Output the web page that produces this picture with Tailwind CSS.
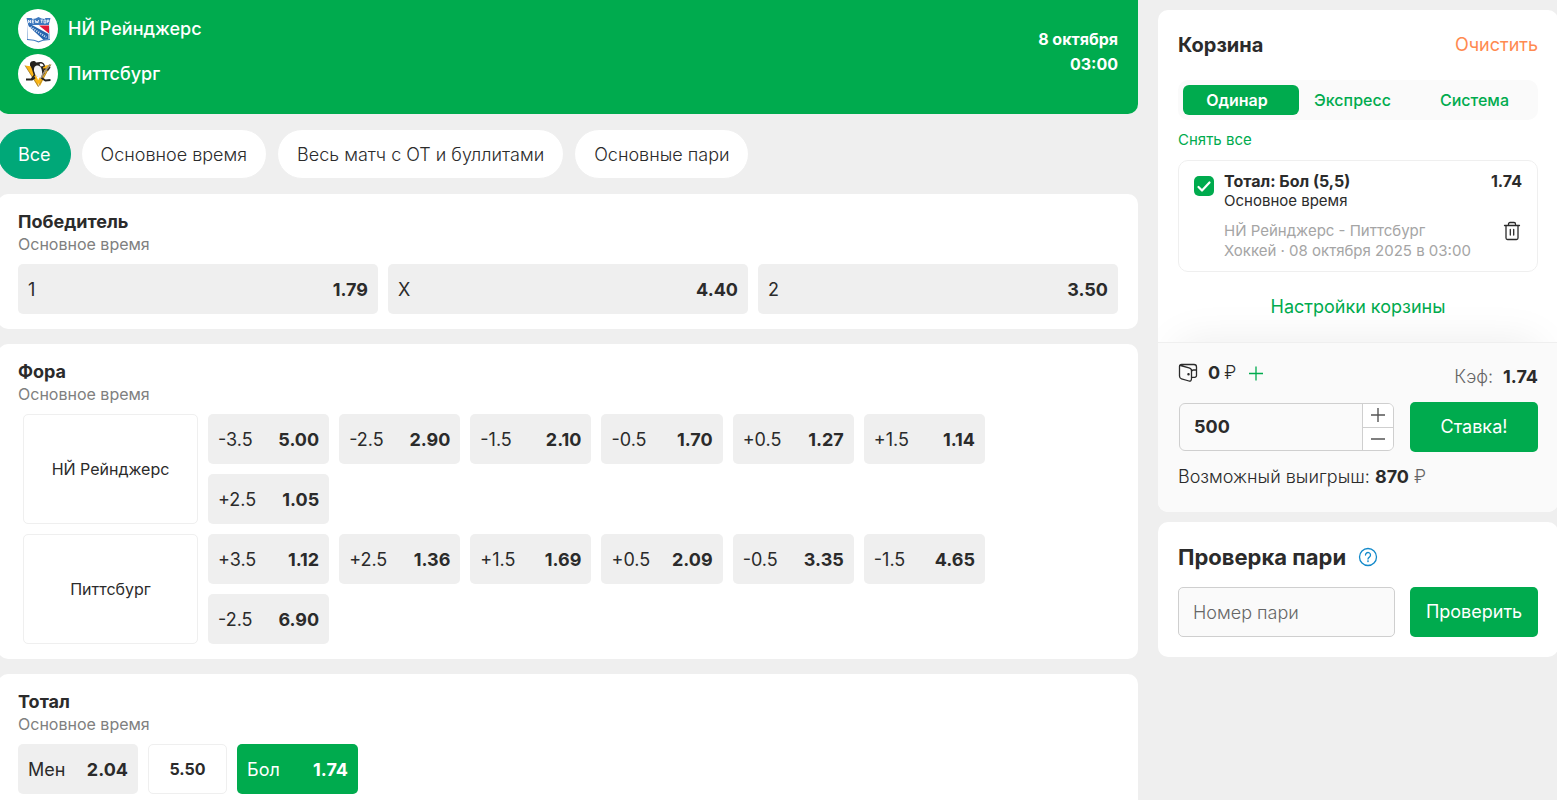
<!DOCTYPE html>
<html lang="ru">
<head>
  <meta charset="UTF-8">
  <meta name="viewport" content="width=device-width, initial-scale=1.0">
  <title>НЙ Рейнджерс - Питтсбург</title>
  <script src="https://cdn.jsdelivr.net/npm/@tailwindcss/browser@4"></script>
</head>
<body class="bg-[#efefef] font-['Inter','Liberation_Sans',sans-serif] text-lg font-normal text-[#2b2b2b]">
  <div class="flex items-start gap-5 h-screen overflow-hidden -ml-0.5 -mr-px">

    <main class="flex-1 min-w-0">
      <header class="flex justify-between h-[114px] pl-5 pr-5 pt-2 bg-[#00ab4e] text-white rounded-b-[10px]">
        <div class="flex flex-col gap-1">
          <div class="flex items-center gap-2.5 font-medium">
            <span class="flex items-center justify-center w-10 h-10 mt-px rounded-full bg-white">
              <svg class="w-[27px] h-[27px]" viewBox="0 0 27 27" aria-hidden="true">
                <path d="M1.500 2h5l1 1 3-.5 3-1.500 3 1.500 3 .5 1-1h5l-1.500 6 1 16-7 .8-4.500 1.700-4.500-1.700-7-.8 1-16z" fill="#3d78bd"/>
                <path d="M3 9h21l.5 14-6.500.8-4.500 1.500-4.500-1.500-6.500-.8z" fill="#fff"/>
                <path d="M14 9.500h10v8z" fill="#e31837"/>
                <path d="M3 9.500l3-1 17.500 9.500v5l-5 1z" fill="#2563ad"/>
                <path d="M5.500 11l16 10.500" stroke="#c9dcf2" stroke-width="2" stroke-dasharray="1.200 1.100"/>
                <path d="M3.500 7V4l2 3V4M9 4H7.300v3H9M7.300 5.500h1.500M10.200 4l.8 3 .9-2 .9 2 .8-3M15.500 4h2.400M16.700 4v3M19 4h1.800v3H19zM22.300 7V4h1.500v1.500h-1.500" fill="none" stroke="#fff" stroke-width=".8"/>
              </svg>
            </span>
            НЙ Рейнджерс
          </div>
          <div class="flex items-center gap-2.5 font-medium">
            <span class="flex items-center justify-center w-10 h-10 mt-px rounded-full bg-white">
              <svg class="w-8 h-8" viewBox="0 0 32 32" aria-hidden="true">
                <path d="M3 7.500l7 1L17 24l-1 5zM21 8l8-1.500L18 28l-2-5z" fill="#fcb514"/>
                <path d="M3 7.500l13.500 21L29 6.500" fill="none" stroke="#8a7440" stroke-width=".7"/>
                <path d="M8 5.500c1-3 5-3 6-1l4-.5c3 0 5 2 5 4.500l-2 .5 2 6-3.500 5-5-2-4-7-2.500-3.500z" fill="#25221f"/>
                <path d="M12.500 9c3-3 6-1 7 2s1 7-1 9c-5-1-8-6-6-11z" fill="#f4f4f6"/>
                <path d="M17.500 6c2-1 4 0 4 2l-3 .5z" fill="#fff"/>
                <path d="M10 9l2.500 8-3 4M22 11l4 1 2-3" fill="none" stroke="#25221f" stroke-width="1.500"/>
                <path d="M28 6.500l-7 9.500-2 5" fill="none" stroke="#9b9083" stroke-width="1.600"/>
                <path d="M4 21.500h6l3-2M19.500 20l4 2.500 5-.5" fill="none" stroke="#25221f" stroke-width="2"/>
              </svg>
            </span>
            Питтсбург
          </div>
        </div>
        <div class="pt-[19px] text-right text-base leading-[25px] font-bold">
          <div>8 октября</div>
          <div>03:00</div>
        </div>
      </header>

      <nav class="flex gap-2.5 mt-[15px]">
        <button class="h-[50px] px-[19px] pt-0.5 rounded-full border border-[#00a878] bg-[#00a878] text-white">Все</button>
        <button class="h-[50px] px-[19px] pt-0.5 rounded-full border border-[#efefef] bg-white font-light">Основное время</button>
        <button class="h-[50px] px-[19px] pt-0.5 rounded-full border border-[#efefef] bg-white font-light">Весь матч с ОТ и буллитами</button>
        <button class="h-[50px] px-[19px] pt-0.5 rounded-full border border-[#efefef] bg-white font-light">Основные пари</button>
      </nav>

      <section class="mt-[15px] px-5 pt-4 pb-[15px] rounded-[10px] bg-white">
        <h2 class="leading-6 font-bold">Победитель</h2>
        <p class="text-base leading-5 text-[#808080]">Основное время</p>
        <div class="grid grid-cols-3 gap-2.5 mt-2.5">
          <button class="flex items-center justify-between h-[50px] px-2.5 pt-0.5 rounded-[5px] bg-[#efefef]"><span>1</span><b>1.79</b></button>
          <button class="flex items-center justify-between h-[50px] px-2.5 pt-0.5 rounded-[5px] bg-[#efefef]"><span>X</span><b>4.40</b></button>
          <button class="flex items-center justify-between h-[50px] px-2.5 pt-0.5 rounded-[5px] bg-[#efefef]"><span>2</span><b>3.50</b></button>
        </div>
      </section>

      <section class="mt-[15px] px-5 pt-4 pb-[15px] rounded-[10px] bg-white">
        <h2 class="leading-6 font-bold">Фора</h2>
        <p class="text-base leading-5 text-[#808080]">Основное время</p>
        <div class="flex gap-2.5 mt-2.5 ml-[5px]">
          <div class="flex items-center justify-center w-[175px] rounded-[5px] border border-[#efefef] text-base">НЙ Рейнджерс</div>
          <div class="grid grid-cols-6 gap-2.5 flex-1 max-w-[777px]">
            <button class="flex items-center justify-between h-[50px] px-2.5 pt-0.5 rounded-[5px] bg-[#efefef]"><span>-3.5</span><b>5.00</b></button>
            <button class="flex items-center justify-between h-[50px] px-2.5 pt-0.5 rounded-[5px] bg-[#efefef]"><span>-2.5</span><b>2.90</b></button>
            <button class="flex items-center justify-between h-[50px] px-2.5 pt-0.5 rounded-[5px] bg-[#efefef]"><span>-1.5</span><b>2.10</b></button>
            <button class="flex items-center justify-between h-[50px] px-2.5 pt-0.5 rounded-[5px] bg-[#efefef]"><span>-0.5</span><b>1.70</b></button>
            <button class="flex items-center justify-between h-[50px] px-2.5 pt-0.5 rounded-[5px] bg-[#efefef]"><span>+0.5</span><b>1.27</b></button>
            <button class="flex items-center justify-between h-[50px] px-2.5 pt-0.5 rounded-[5px] bg-[#efefef]"><span>+1.5</span><b>1.14</b></button>
            <button class="flex items-center justify-between h-[50px] px-2.5 pt-0.5 rounded-[5px] bg-[#efefef]"><span>+2.5</span><b>1.05</b></button>
          </div>
        </div>
        <div class="flex gap-2.5 mt-2.5 ml-[5px]">
          <div class="flex items-center justify-center w-[175px] rounded-[5px] border border-[#efefef] text-base">Питтсбург</div>
          <div class="grid grid-cols-6 gap-2.5 flex-1 max-w-[777px]">
            <button class="flex items-center justify-between h-[50px] px-2.5 pt-0.5 rounded-[5px] bg-[#efefef]"><span>+3.5</span><b>1.12</b></button>
            <button class="flex items-center justify-between h-[50px] px-2.5 pt-0.5 rounded-[5px] bg-[#efefef]"><span>+2.5</span><b>1.36</b></button>
            <button class="flex items-center justify-between h-[50px] px-2.5 pt-0.5 rounded-[5px] bg-[#efefef]"><span>+1.5</span><b>1.69</b></button>
            <button class="flex items-center justify-between h-[50px] px-2.5 pt-0.5 rounded-[5px] bg-[#efefef]"><span>+0.5</span><b>2.09</b></button>
            <button class="flex items-center justify-between h-[50px] px-2.5 pt-0.5 rounded-[5px] bg-[#efefef]"><span>-0.5</span><b>3.35</b></button>
            <button class="flex items-center justify-between h-[50px] px-2.5 pt-0.5 rounded-[5px] bg-[#efefef]"><span>-1.5</span><b>4.65</b></button>
            <button class="flex items-center justify-between h-[50px] px-2.5 pt-0.5 rounded-[5px] bg-[#efefef]"><span>-2.5</span><b>6.90</b></button>
          </div>
        </div>
      </section>

      <section class="mt-[15px] px-5 pt-4 pb-[15px] rounded-[10px] bg-white">
        <h2 class="leading-6 font-bold">Тотал</h2>
        <p class="text-base leading-5 text-[#808080]">Основное время</p>
        <div class="flex gap-2.5 mt-2.5">
          <button class="flex items-center justify-between w-[120px] h-[50px] px-2.5 pt-0.5 rounded-[5px] bg-[#efefef]"><span>Мен</span><b>2.04</b></button>
          <div class="flex items-center justify-center w-[79px] rounded-[5px] border border-[#efefef] text-base font-bold">5.50</div>
          <button class="flex items-center justify-between w-[121px] h-[50px] px-2.5 pt-0.5 rounded-[5px] bg-[#00ab4e] text-white"><span>Бол</span><b>1.74</b></button>
        </div>
      </section>
    </main>

    <aside class="w-[400px] shrink-0 pt-2.5">
      <section class="rounded-[10px] bg-white overflow-hidden">
        <div class="flex flex-col h-[332px] px-5 pt-5">
          <div class="flex items-center justify-between leading-[30px]">
            <h2 class="text-xl leading-[30px] font-bold">Корзина</h2>
            <button class="text-[#ff8a50]">Очистить</button>
          </div>
          <div class="grid grid-cols-[116px_1fr_1fr] mt-5 p-[5px] rounded-[10px] bg-[#fafafa] text-base leading-[30px] font-medium text-[#00ab4e]">
            <button class="pr-2 rounded-md bg-[#00ab4e] text-white font-semibold">Одинар</button>
            <button class="pr-2.5">Экспресс</button>
            <button>Система</button>
          </div>
          <button class="self-start mt-2.5 text-[15px] leading-5 text-[#00ab4e]">Снять все</button>

          <div class="flex gap-2.5 mt-2.5 h-28 px-[15px] pt-[10px] rounded-[10px] border border-[#efefef]">
            <label class="relative mt-[5px] h-5 w-5 shrink-0">
              <input type="checkbox" checked aria-label="Тотал: Бол (5,5)" class="block w-5 h-5 appearance-none rounded-[5px] bg-[#00ab4e]">
              <svg class="absolute inset-0 w-5 h-5 pointer-events-none" viewBox="0 0 20 20" fill="none" stroke="#fff" stroke-width="2.200" stroke-linecap="round" stroke-linejoin="round" aria-hidden="true"><path d="M4.500 11l3.500 3.500L15.500 6.500"/></svg>
            </label>
            <div class="flex-1 text-[15px] leading-5">
              <div class="text-base leading-5 font-bold">Тотал: Бол (5,5)</div>
              <div>Основное время</div>
              <div class="mt-2.5 text-[#a5a5a5]">НЙ Рейнджерс - Питтсбург</div>
              <div class="text-[#a5a5a5]">Хоккей · 08 октября 2025 в 03:00</div>
            </div>
            <div class="flex flex-col items-end">
              <b class="text-base leading-5">1.74</b>
              <button class="mt-[30px]" aria-label="Удалить">
                <svg class="w-5 h-5" viewBox="0 0 20 20" fill="none" stroke="#2b2b2b" stroke-width="1.300" stroke-linecap="round" stroke-linejoin="round" aria-hidden="true"><path d="M2.500 4.500h15M6.500 4.500V3A1.500 1.500 0 0 1 8 1.500h4A1.500 1.500 0 0 1 13.500 3v1.500M4 4.500V17a1.500 1.500 0 0 0 1.500 1.500h9A1.500 1.500 0 0 0 16 17V4.500M8.300 8.500V14M11.700 8.500V14"/></svg>
              </button>
            </div>
          </div>

          <button class="self-center mt-5 leading-[30px] text-[#00ab4e]">Настройки корзины</button>
        </div>

        <div class="relative h-[170px] px-5 pt-[15px] bg-[#fafafa] border-t border-[#efefef] shadow-[0_-20px_40px_-20px_rgba(0,0,0,0.08)]">
          <div class="flex justify-between items-start leading-[30px]">
            <div class="flex items-center">
              <svg class="w-5 h-5" viewBox="0 0 20 20" fill="none" stroke="#2b2b2b" stroke-width="1.300" stroke-linejoin="round" stroke-linecap="round" aria-hidden="true"><path d="M2.500 2.500l8.500 2.300c1.500.4 2.500 1.300 2.500 3v8c0 1.700-1 2.500-2.500 2.200l-7.500-2.200C2.200 15.400 1.500 14.500 1.500 13V3.500c0-1.200.8-2 2-2H16a2.500 2.500 0 0 1 2.500 2.500v8.500a1.800 1.800 0 0 1-1.800 1.800h-3M18.500 7h-3a2 2 0 0 0-2 2"/><circle cx="10.500" cy="11.200" r=".6" fill="#2b2b2b"/></svg>
              <b class="ml-2.5">0</b><span class="ml-1 font-light">₽</span>
              <button class="ml-3" aria-label="Пополнить">
                <svg class="w-4 h-4" viewBox="0 0 16 16" stroke="#00ab4e" stroke-width="1.300" aria-hidden="true"><path d="M1 8.500h14M8 1.500v14"/></svg>
              </button>
            </div>
            <div class="pt-1"><span class="font-light text-[#666]">Кэф:</span><b class="ml-2.5">1.74</b></div>
          </div>
          <div class="flex gap-4 mt-2.5">
            <div class="flex flex-1 min-w-0 h-12 mt-px ml-px rounded-md border border-[#cfcfcf] overflow-hidden">
              <input type="text" value="500" aria-label="Сумма ставки" class="flex-1 min-w-0 pl-3.5 font-bold outline-none">
              <div class="flex flex-col w-[31px] border-l border-[#cfcfcf] bg-white">
                <button class="flex flex-1 items-center justify-center" aria-label="Больше">
                  <svg class="w-4 h-4" viewBox="0 0 16 16" stroke="#555" stroke-width="1.400" aria-hidden="true"><path d="M1 8h14M8 1v14"/></svg>
                </button>
                <button class="flex flex-1 items-center justify-center border-t border-[#cfcfcf]" aria-label="Меньше">
                  <svg class="w-4 h-4" viewBox="0 0 16 16" stroke="#555" stroke-width="1.400" aria-hidden="true"><path d="M1 8h14"/></svg>
                </button>
              </div>
            </div>
            <button class="w-32 h-[50px] rounded-[5px] bg-[#00ab4e] text-white">Ставка!</button>
          </div>
          <p class="mt-2.5 leading-[30px] font-light">Возможный выигрыш: <b class="font-bold">870</b> <span class="text-[#666]">₽</span></p>
        </div>
      </section>

      <section class="mt-2.5 px-5 pt-5 pb-5 rounded-[10px] bg-white">
        <div class="flex items-center gap-3">
          <h2 class="text-[22px] leading-[30px] font-bold">Проверка пари</h2>
          <svg class="w-5 h-5" viewBox="0 0 20 20" fill="none" stroke="#1289ca" stroke-width="1.300" stroke-linecap="round" aria-hidden="true"><circle cx="10" cy="10" r="8.500"/><path d="M7.500 8a2.500 2.500 0 1 1 4 2c-1 .7-1.500 1-1.500 2"/><circle cx="10" cy="14.300" r=".3"/></svg>
        </div>
        <form class="flex gap-[15px] mt-[15px]">
          <input type="text" placeholder="Номер пари" aria-label="Номер пари" class="flex-1 min-w-0 h-[50px] px-3.5 rounded-[5px] border border-[#cfcfcf] bg-[#fafafa] font-light placeholder-[#666]">
          <button type="button" class="w-32 h-[50px] rounded-[5px] bg-[#00ab4e] text-white">Проверить</button>
        </form>
      </section>
    </aside>

  </div>
</body>
</html>
